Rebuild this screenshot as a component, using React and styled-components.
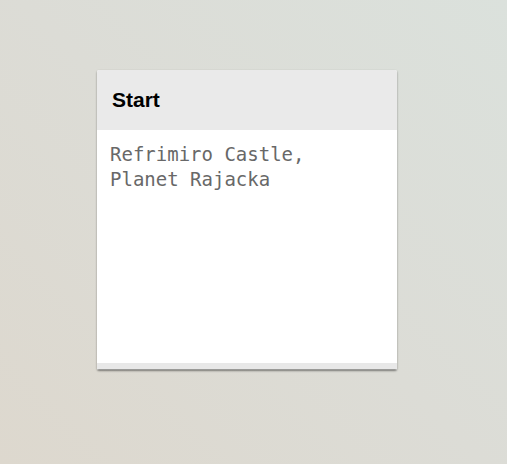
import React from 'react'
import styled, { createGlobalStyle } from 'styled-components'

const GlobalStyle = createGlobalStyle`
  html, body {
    margin: 0;
    padding: 0;
    height: 100%;
  }
  body {
    background: linear-gradient(225deg, #dbe1dc 0%, #dcdcd6 50%, #ddd8ce 100%);
    font-family: "Liberation Sans", Arial, sans-serif;
  }
  #root {
    height: 100%;
  }
`

const Stage = styled.div`
  height: 464px;
  padding: 70px 0 0 97px;
  box-sizing: border-box;
`

const Card = styled.div`
  width: 300px;
  height: 300px;
  display: flex;
  flex-direction: column;
  background: #fff;
  border-radius: 2px;
  box-shadow: 0 1px 2px rgba(0, 0, 0, 0.45);
  overflow: hidden;
`

const Header = styled.div`
  height: 60px;
  flex: none;
  display: flex;
  align-items: center;
  padding: 0 15px;
  background: #eaeaea;
`

const Title = styled.h3`
  margin: 0;
  font-size: 21px;
  font-weight: bold;
  color: #000;
`

const Body = styled.div`
  flex: 1;
  padding: 12px 13px;
  font-family: "DejaVu Sans Mono", "Liberation Mono", monospace;
  font-size: 19px;
  line-height: 25px;
  color: #686868;
  white-space: pre-wrap;
`

const Footer = styled.div`
  height: 6px;
  flex: none;
  background: #e8e8e8;
  border-bottom: 1px solid #9a9a98;
`

export default function App() {
  return (
    <>
      <GlobalStyle />
      <Stage>
        <Card>
          <Header>
            <Title>Start</Title>
          </Header>
          <Body>{'Refrimiro Castle,\nPlanet Rajacka'}</Body>
          <Footer />
        </Card>
      </Stage>
    </>
  )
}
